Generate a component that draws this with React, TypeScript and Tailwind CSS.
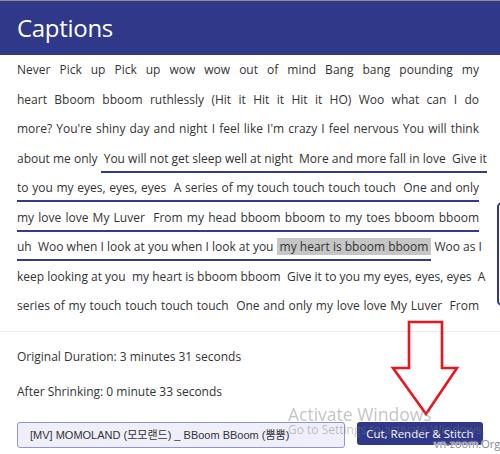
import React from "react";

const U = "border-b-2 border-[#343a8e] pb-[4px]";

function Line({ children }: { children: React.ReactNode }) {
  return (
    <div className="whitespace-nowrap text-justify [text-align-last:justify]">{children}</div>
  );
}

export default function App() {
  return (
    <div className="relative w-[500px] h-[454px] overflow-hidden bg-white font-['Open_Sans',sans-serif] text-[#333]">
      <header className="h-[55px] border-t border-[#8c8c8c] bg-[#303889] flex items-center pl-[17px]">
        <h1 className="text-white text-[24px] leading-none tracking-[-0.3px]">Captions</h1>
      </header>

      <div className="h-[276px] overflow-hidden px-[17px] pr-[21px] text-[12px] leading-[29.5px]">
        <Line>Never Pick up Pick up wow wow out of mind Bang bang pounding my</Line>
        <Line>heart Bboom bboom ruthlessly (Hit it Hit it Hit it HO) Woo what can I do</Line>
        <Line>more? You're shiny day and night I feel like I'm crazy I feel nervous You will think</Line>
        <Line>
          about me only <span className={`${U} pl-[3px]`}>You will not get sleep well at night{"\u00a0"} More and more fall in love{"\u00a0"} Give it</span>
        </Line>
        <Line>
          <span className={U}>to you my eyes, eyes, eyes{"\u00a0"} A series of my touch touch touch touch{"\u00a0"} One and only</span>
        </Line>
        <Line>
          <span className={U}>my love love My Luver{"\u00a0"} From my head bboom bboom to my toes bboom bboom</span>
        </Line>
        <Line>
          <span className={U}>
            uh{"\u00a0"} Woo when I look at you when I look at you{"\u00a0"}
            <span className="bg-[#c6c6c6] px-[3px]">my heart is bboom bboom</span>
          </span>{" "}
          Woo as I
        </Line>
        <Line>keep looking at you{"\u00a0"} my heart is bboom bboom{"\u00a0"} Give it to you my eyes, eyes, eyes{"\u00a0"} A</Line>
        <Line>series of my touch touch touch touch{"\u00a0"} One and only my love love My Luver{"\u00a0"} From</Line>
      </div>

      <div className="border-t border-[#e8e8f6] px-[17px] text-[12px] leading-[20px]">
        <p className="mt-[15px]">Original Duration: 3 minutes 31 seconds</p>
        <p className="mt-[15px]">After Shrinking: 0 minute 33 seconds</p>
        <div className="mt-[20px] flex items-start gap-[12px]">
          <div className="w-[330px] h-[26px] rounded-[3px] border border-[#8e93dc] bg-[#efeffb] flex items-center pl-[12px] font-['Liberation_Sans','Noto_Sans_CJK_KR',sans-serif] text-[11px] text-[#333] whitespace-nowrap overflow-hidden">
            [MV] MOMOLAND (모모랜드) _ BBoom BBoom (뿜뿜)
          </div>
          <button className="w-[127px] h-[23px] rounded-[3px] bg-[#303889] text-white text-[11.5px] leading-none flex items-center justify-center">
            Cut, Render &amp; Stitch
          </button>
        </div>
      </div>

      {/* partial element at right edge */}
      <div className="absolute left-[497px] top-[202px] w-[14px] h-[104px] rounded-[5px] border-2 border-[#303889]" />

      {/* red arrow annotation */}
      <svg className="absolute left-0 top-0 pointer-events-none" width="500" height="454" viewBox="0 0 500 454">
        <path
          d="M409 322 L442 322 L442 368 L457 368 L426 414 L393 368 L409 368 Z"
          fill="none"
          stroke="#e8161f"
          strokeWidth="2.6"
          strokeLinejoin="miter"
        />
      </svg>

      {/* watermarks */}
      <div className="absolute left-[288px] top-[403px] pointer-events-none text-[17.5px] leading-[22px] text-[rgba(120,120,120,0.45)] whitespace-nowrap">
        Activate Windows
      </div>
      <div className="absolute left-[288px] top-[422px] pointer-events-none text-[12px] leading-[16px] text-[rgba(120,120,120,0.45)] whitespace-nowrap">
        Go to Settings to activate Windows.
      </div>
      <div className="absolute left-[434px] top-[437px] pointer-events-none text-[11px] leading-[14px] text-[#8a8a8a] whitespace-nowrap [text-shadow:0_0_1px_#fff,0_0_1px_#fff,0_0_2px_#fff]">
        vn-zoom.Org
      </div>
    </div>
  );
}
